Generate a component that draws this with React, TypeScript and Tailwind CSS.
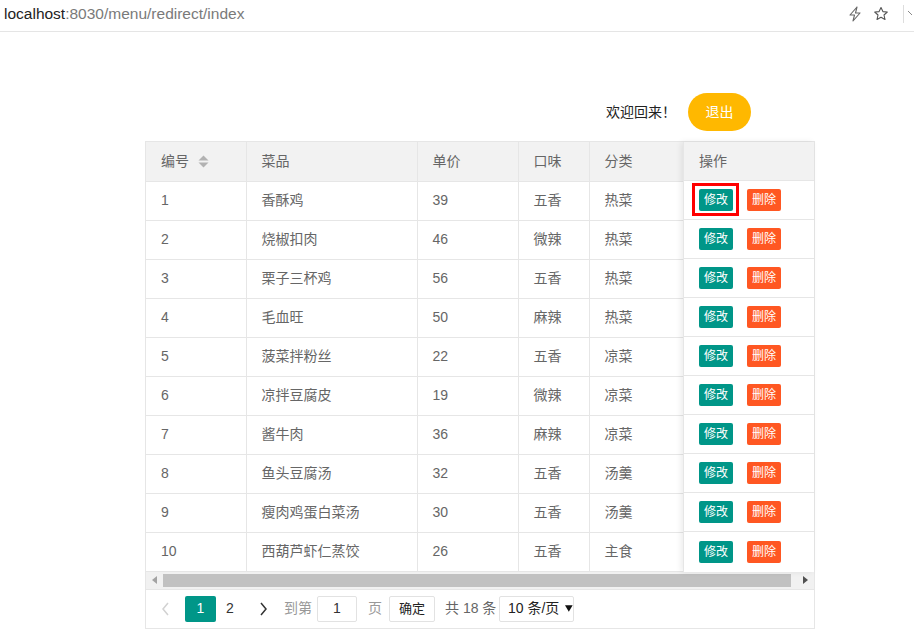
import React from "react";

const rows = [
  { id: 1, name: "香酥鸡", price: 39, taste: "五香", type: "热菜" },
  { id: 2, name: "烧椒扣肉", price: 46, taste: "微辣", type: "热菜" },
  { id: 3, name: "栗子三杯鸡", price: 56, taste: "五香", type: "热菜" },
  { id: 4, name: "毛血旺", price: 50, taste: "麻辣", type: "热菜" },
  { id: 5, name: "菠菜拌粉丝", price: 22, taste: "五香", type: "凉菜" },
  { id: 6, name: "凉拌豆腐皮", price: 19, taste: "微辣", type: "凉菜" },
  { id: 7, name: "酱牛肉", price: 36, taste: "麻辣", type: "凉菜" },
  { id: 8, name: "鱼头豆腐汤", price: 32, taste: "五香", type: "汤羹" },
  { id: 9, name: "瘦肉鸡蛋白菜汤", price: 30, taste: "五香", type: "汤羹" },
  { id: 10, name: "西葫芦虾仁蒸饺", price: 26, taste: "五香", type: "主食" },
];

const font = { fontFamily: '"Liberation Sans", "Noto Sans CJK SC", sans-serif' };

function SortIcon() {
  return (
    <svg width="11" height="13" viewBox="0 0 11 13" className="ml-[9px]">
      <path d="M0.5 5.5 L5.5 0.5 L10.5 5.5 Z" fill="#b2b2b2" />
      <path d="M0.5 7.5 L5.5 12.5 L10.5 7.5 Z" fill="#b2b2b2" />
    </svg>
  );
}

export default function App() {
  return (
    <div className="w-[914px] h-[633px] bg-white overflow-hidden text-[#666]" style={font}>
      {/* browser bar */}
      <div className="h-[32px] border-b border-[#e5e5e5] flex items-center pl-[4px]">
        <div className="text-[15.5px] -mt-[3px]">
          <span className="text-[#222]">localhost</span>
          <span className="text-[#7a7a7a]">:8030/menu/redirect/index</span>
        </div>
        <div className="ml-auto flex items-center -mt-[4px]">
          <svg width="14" height="16" viewBox="0 0 14 16" fill="none" stroke="#666" strokeWidth="1.1" strokeLinejoin="round">
            <path d="M9 1 L2 9 H6.5 L5 15 L12 7 H7.5 Z" />
          </svg>
          <svg width="16" height="16" viewBox="0 0 16 16" fill="none" stroke="#555" strokeWidth="1.1" strokeLinejoin="round" className="ml-[11px]">
            <path d="M8 1.5 L9.9 5.6 L14.3 6 L11 9 L12 13.5 L8 11.2 L4 13.5 L5 9 L1.7 6 L6.1 5.6 Z" />
          </svg>
          <div className="w-px h-[18px] bg-[#ddd] ml-[14px]" />
          <svg width="6" height="10" viewBox="0 0 6 10" fill="none" stroke="#888" strokeWidth="1" className="ml-[4px]">
            <path d="M0 2 L4 6" />
          </svg>
        </div>
      </div>

      <div className="ml-[145px] w-[670px]">
        {/* welcome */}
        <div className="flex items-center justify-end pr-[64px] mt-[61px] h-[38px]">
          <span className="text-[14px] text-[#222] w-[70px] mr-[12px]">欢迎回来！</span>
          <button className="w-[63px] h-[38px] rounded-full bg-[#FFB800] text-white text-[14px]">退出</button>
        </div>

        {/* table */}
        <div className="mt-[10px] border border-[#e6e6e6] text-[14px]">
          <div className="flex">
            <div className="flex-1 overflow-hidden">
              <table className="border-collapse table-fixed w-[620px]">
                <colgroup>
                  <col className="w-[100px]" />
                  <col className="w-[171px]" />
                  <col className="w-[101px]" />
                  <col className="w-[71px]" />
                  <col className="w-[177px]" />
                </colgroup>
                <thead>
                  <tr className="bg-[#f2f2f2] h-[39px]">
                    <th className="font-normal text-left pl-[15px] border-b border-r border-[#e6e6e6]">
                      <span className="inline-flex items-center">编号<SortIcon /></span>
                    </th>
                    <th className="font-normal text-left pl-[15px] border-b border-r border-[#e6e6e6]">菜品</th>
                    <th className="font-normal text-left pl-[15px] border-b border-r border-[#e6e6e6]">单价</th>
                    <th className="font-normal text-left pl-[15px] border-b border-r border-[#e6e6e6]">口味</th>
                    <th className="font-normal text-left pl-[15px] border-b border-[#e6e6e6]">分类</th>
                  </tr>
                </thead>
                <tbody>
                  {rows.map((r) => (
                    <tr key={r.id} className="h-[39px]">
                      <td className="pl-[15px] border-b border-r border-[#e6e6e6]">{r.id}</td>
                      <td className="pl-[15px] border-b border-r border-[#e6e6e6]">{r.name}</td>
                      <td className="pl-[15px] border-b border-r border-[#e6e6e6]">{r.price}</td>
                      <td className="pl-[15px] border-b border-r border-[#e6e6e6]">{r.taste}</td>
                      <td className="pl-[15px] border-b border-[#e6e6e6]">{r.type}</td>
                    </tr>
                  ))}
                </tbody>
              </table>
            </div>
            {/* fixed right column */}
            <div className="w-[131px] shrink-0 border-l border-[#e6e6e6] shadow-[-2px_0_6px_rgba(0,0,0,0.08)] z-10 bg-white">
              <div className="h-[39px] bg-[#f2f2f2] border-b border-[#e6e6e6] flex items-center pl-[15px]">操作</div>
              {rows.map((r, i) => (
                <div key={r.id} className={"h-[39px] flex items-center pl-[15px] gap-[14px] " + (i < rows.length - 1 ? "border-b border-[#e6e6e6]" : "")}>
                  <div className="relative">
                    <button className="w-[34px] h-[22px] rounded-[2px] bg-[#009688] text-white text-[12px]">修改</button>
                    {i === 0 && (
                      <div className="absolute -left-[7px] -top-[6px] w-[47px] h-[33px] border-[3px] border-[#ff0000]" />
                    )}
                  </div>
                  <button className="w-[34px] h-[22px] rounded-[2px] bg-[#FF5722] text-white text-[12px]">删除</button>
                </div>
              ))}
            </div>
          </div>

          {/* scrollbar */}
          <div className="h-[17px] bg-[#f1f1f1] flex items-center">
            <div className="w-[17px] h-[17px] flex items-center justify-center">
              <svg width="5" height="8" viewBox="0 0 5 8"><path d="M5 0 L0 4 L5 8 Z" fill="#a3a3a3" /></svg>
            </div>
            <div className="w-[628px] h-[13px] bg-[#c1c1c1]" />
            <div className="ml-auto w-[17px] h-[17px] flex items-center justify-center">
              <svg width="5" height="8" viewBox="0 0 5 8"><path d="M0 0 L5 4 L0 8 Z" fill="#505050" /></svg>
            </div>
          </div>

          {/* pagination */}
          <div className="h-[39px] border-t border-[#e6e6e6] flex items-center pl-[15px] text-[14px] whitespace-nowrap">
            <svg width="10" height="14" viewBox="0 0 10 14" fill="none" stroke="#d2d2d2" strokeWidth="1.5">
              <path d="M7 1 L2 7 L7 13" />
            </svg>
            <div className="ml-[14px] w-[31px] h-[26px] rounded-[2px] bg-[#009688] text-white flex items-center justify-center">1</div>
            <div className="w-[28px] text-center text-[#333]">2</div>
            <svg width="10" height="14" viewBox="0 0 10 14" fill="none" stroke="#333" strokeWidth="1.5" className="ml-[14px]">
              <path d="M3 1 L8 7 L3 13" />
            </svg>
            <span className="ml-[16px] text-[#999]">到第</span>
            <div className="ml-[5px] w-[40px] h-[26px] border border-[#e2e2e2] rounded-[2px] flex items-center justify-center text-[#333]">1</div>
            <span className="ml-[11px] text-[#999]">页</span>
            <div className="ml-[7px] w-[46px] h-[26px] border border-[#e2e2e2] rounded-[2px] flex items-center justify-center text-[#222] text-[13px]">确定</div>
            <span className="ml-[10px] w-[54px] inline-block text-[#666]">共 18 条</span>
            <div className="w-[75px] h-[26px] border border-[#e2e2e2] rounded-[2px] flex items-center pl-[8px] text-[#222]">
              10 条/页
              <svg width="8" height="7" viewBox="0 0 8 7" className="ml-[6px]"><path d="M0 0 L8 0 L4 7 Z" fill="#111" /></svg>
            </div>
          </div>
        </div>
      </div>
    </div>
  );
}
